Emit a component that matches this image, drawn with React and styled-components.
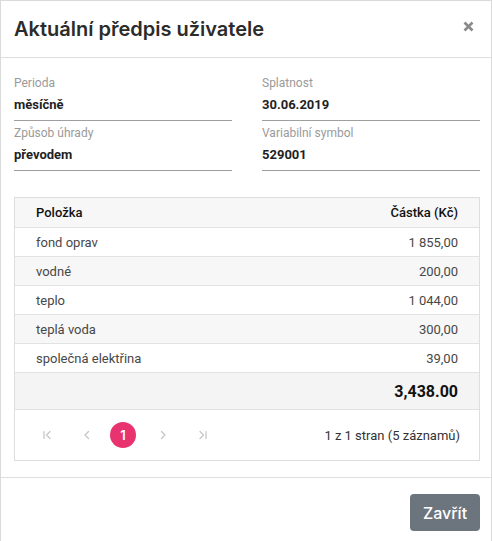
import React from "react";
import styled, { createGlobalStyle } from "styled-components";

const GlobalStyle = createGlobalStyle`
  html, body {
    margin: 0;
    padding: 0;
    background: #ffffff;
  }
  body {
    font-family: Roboto, "Liberation Sans", sans-serif;
  }
`;

const items = [
  { name: "fond oprav", amount: "1 855,00" },
  { name: "vodné", amount: "200,00" },
  { name: "teplo", amount: "1 044,00" },
  { name: "teplá voda", amount: "300,00" },
  { name: "společná elektřina", amount: "39,00" },
];

const PageIcon = ({ type }) => {
  const paths = {
    first: "M2 1.5v7M8 1.5L4.5 5 8 8.5",
    prev: "M6.5 1.5L3 5l3.5 3.5",
    next: "M3.5 1.5L7 5 3.5 8.5",
    last: "M8 1.5v7M2 1.5L5.5 5 2 8.5",
  };
  return (
    <svg width="10" height="10" viewBox="0 0 10 10" fill="none">
      <path d={paths[type]} stroke="#c4c4c4" strokeWidth="1.2" strokeLinecap="round" strokeLinejoin="round" />
    </svg>
  );
};

const App = () => {
  return (
    <>
      <GlobalStyle />
      <Modal>
        <Header>
          <Title>Aktuální předpis uživatele</Title>
          <Close aria-label="close">
            <svg width="11" height="11" viewBox="0 0 11 11">
              <path d="M1.5 1.5l8 8M9.5 1.5l-8 8" stroke="#8a8a8a" strokeWidth="2.6" strokeLinecap="butt" />
            </svg>
          </Close>
        </Header>
        <Body>
          <Fields>
            <Field>
              <Label>Perioda</Label>
              <Value>měsíčně</Value>
            </Field>
            <Field>
              <Label>Splatnost</Label>
              <Value>30.06.2019</Value>
            </Field>
            <Field>
              <Label>Způsob úhrady</Label>
              <Value>převodem</Value>
            </Field>
            <Field>
              <Label>Variabilní symbol</Label>
              <Value>529001</Value>
            </Field>
          </Fields>

          <Table>
            <HeadRow>
              <span>Položka</span>
              <span>Částka (Kč)</span>
            </HeadRow>
            {items.map((item, i) => (
              <Row key={item.name} $striped={i % 2 === 1}>
                <span>{item.name}</span>
                <span>{item.amount}</span>
              </Row>
            ))}
            <TotalRow>3,438.00</TotalRow>
            <Pager>
              <PagerButtons>
                <PageIconBtn $shift={4}><PageIcon type="first" /></PageIconBtn>
                <PageIconBtn $shift={4}><PageIcon type="prev" /></PageIconBtn>
                <PageNumber>1</PageNumber>
                <PageIconBtn><PageIcon type="next" /></PageIconBtn>
                <PageIconBtn><PageIcon type="last" /></PageIconBtn>
              </PagerButtons>
              <PagerInfo>1 z 1 stran (5 záznamů)</PagerInfo>
            </Pager>
          </Table>
        </Body>
        <Footer>
          <CloseButton>Zavřít</CloseButton>
        </Footer>
      </Modal>
    </>
  );
};

const Modal = styled.div`
  width: 492px;
  height: 541px;
  box-sizing: border-box;
  border: 1px solid #dadada;
  border-bottom: none;
  display: flex;
  flex-direction: column;
  background: #fff;
`;

const Header = styled.div`
  height: 57px;
  box-sizing: border-box;
  border-bottom: 1px solid #dedede;
  display: flex;
  align-items: center;
  justify-content: space-between;
  padding: 0 17px 0 13px;
`;

const Title = styled.h1`
  margin: 0;
  font-family: Inter, "Open Sans", sans-serif;
  font-weight: 600;
  font-size: 20px;
  color: #2b2b2b;
`;

const Close = styled.span`
  display: flex;
  margin-top: -5px;
`;

const Body = styled.div`
  padding: 17px 11px 16px 13px;
`;

const Fields = styled.div`
  display: grid;
  grid-template-columns: 1fr 1fr;
  column-gap: 30px;
  row-gap: 4px;
`;

const Field = styled.div`
  display: flex;
  flex-direction: column;
  padding-bottom: 6px;
  border-bottom: 1px solid #9e9e9e;
`;

const Label = styled.div`
  font-size: 12px;
  line-height: 16px;
  color: #9a9a9a;
`;

const Value = styled.div`
  margin-top: 5px;
  font-size: 13px;
  line-height: 18px;
  font-weight: 700;
  color: #1f1f1f;
`;

const Table = styled.div`
  margin-top: 26px;
  border: 1px solid #dedede;
  display: flex;
  flex-direction: column;
`;

const BaseRow = styled.div`
  display: flex;
  justify-content: space-between;
  align-items: center;
  padding: 0 21px 0 21px;
  font-size: 13px;
`;

const HeadRow = styled(BaseRow)`
  height: 29px;
  background: #f7f7f7;
  color: #111;
  font-weight: 500;
`;

const Row = styled(BaseRow)`
  height: 28px;
  border-top: 1px solid #e2e2e2;
  background: ${(p) => (p.$striped ? "#f7f7f7" : "#fff")};
  color: #474747;
`;

const TotalRow = styled(BaseRow)`
  height: 36px;
  border-top: 1px solid #e2e2e2;
  background: #f4f4f4;
  justify-content: flex-end;
  font-size: 16px;
  font-weight: 700;
  color: #111;
`;

const Pager = styled(BaseRow)`
  height: 50px;
  border-top: 1px solid #e2e2e2;
  padding: 0 19px 0 15px;
`;

const PagerButtons = styled.div`
  display: flex;
  align-items: center;
  gap: 14px;
`;

const PageIconBtn = styled.span`
  width: 26px;
  display: flex;
  justify-content: center;
  transform: translateX(${(p) => p.$shift || 0}px);
`;

const PageNumber = styled.span`
  width: 26px;
  height: 26px;
  border-radius: 50%;
  background: #e8336f;
  color: #fff;
  font-family: Inter, sans-serif;
  font-weight: 600;
  font-size: 13px;
  display: flex;
  align-items: center;
  justify-content: center;
`;

const PagerInfo = styled.span`
  font-size: 13px;
  color: #333;
`;

const Footer = styled.div`
  border-top: 1px solid #dedede;
  display: flex;
  justify-content: flex-end;
  padding: 16px 11px 0 0;
`;

const CloseButton = styled.button`
  width: 70px;
  height: 37px;
  border: none;
  border-radius: 4px;
  background: #6c757d;
  color: #fff;
  font-family: Inter, "Open Sans", sans-serif;
  font-weight: 500;
  font-size: 16px;
  cursor: pointer;
`;

export default App;
